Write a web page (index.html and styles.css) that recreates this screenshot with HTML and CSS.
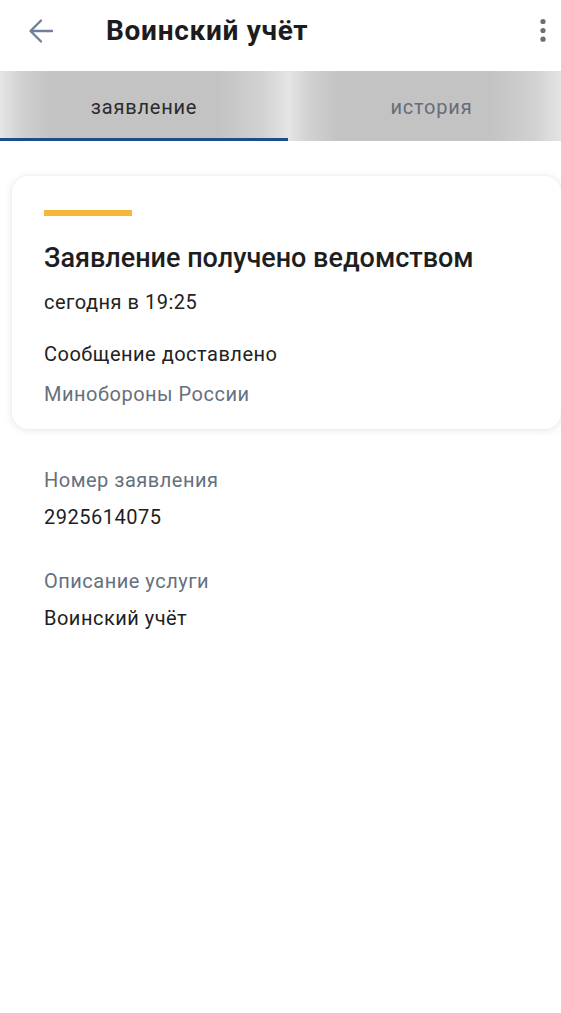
FILE: index.html
```html
<!DOCTYPE html>
<html lang="ru">
<head>
<meta charset="utf-8">
<title>Воинский учёт</title>
<link rel="stylesheet" href="styles.css">
</head>
<body>
<header class="topbar">
  <svg class="back" width="30" height="30" viewBox="0 0 30 30" aria-hidden="true">
    <path d="M25 15 H4 M14 4.5 L3.5 15 L14 25.5" fill="none" stroke="#71809a" stroke-width="2.4" stroke-linecap="round" stroke-linejoin="round"/>
  </svg>
  <h1 class="title">Воинский учёт</h1>
  <svg class="more" width="8" height="30" viewBox="0 0 8 30" aria-hidden="true">
    <circle cx="4" cy="5.5" r="2.6" fill="#6b6e73"/>
    <circle cx="4" cy="14.5" r="2.6" fill="#6b6e73"/>
    <circle cx="4" cy="23.2" r="2.6" fill="#6b6e73"/>
  </svg>
</header>

<nav class="tabs">
  <div class="tab tab-active">заявление</div>
  <div class="tab tab-right">история</div>
</nav>

<section class="card">
  <div class="status-bar"></div>
  <h2 class="card-title">Заявление получено ведомством</h2>
  <p class="card-date">сегодня в 19:25</p>
  <p class="card-msg">Сообщение доставлено</p>
  <p class="card-org">Минобороны России</p>
</section>

<dl class="details">
  <dt class="label">Номер заявления</dt>
  <dd class="value">2925614075</dd>
  <dt class="label label-next">Описание услуги</dt>
  <dd class="value">Воинский учёт</dd>
</dl>
</body>
</html>
```

FILE: styles.css
```css
html, body {
  margin: 0;
  padding: 0;
  background: #ffffff;
}

body {
  font-family: Roboto, "Noto Sans", "Liberation Sans", sans-serif;
  color: #202124;
  width: 561px;
  overflow-x: hidden;
}

.topbar {
  height: 71px;
  display: flex;
  align-items: center;
}

.back {
  margin-left: 27px;
  margin-top: -10px;
  flex: none;
}

.title {
  margin: -10px 0 0 49px;
  font-size: 28px;
  font-weight: 700;
  letter-spacing: 0.7px;
  line-height: 32px;
  color: #1c1c1e;
  flex: 1;
}

.more {
  margin-right: 14px;
  margin-top: -10px;
  flex: none;
}

.tabs {
  display: grid;
  grid-template-columns: 288px 1fr;
  height: 70px;
}

.tab {
  display: flex;
  align-items: center;
  justify-content: center;
  font-size: 20px;
  line-height: 24px;
  letter-spacing: 0.8px;
  color: #666d78;
  background: linear-gradient(to right, #e6e6e6 0, #d2d2d2 20px, #c3c3c3 50px, #c3c3c3 calc(100% - 70px), #d2d2d2 calc(100% - 25px), #e4e4e4 100%);
  box-sizing: border-box;
  padding-top: 2px;
}

.tab-active {
  color: #2b2b2b;
  border-bottom: 3px solid #1f4c8c;
  padding-top: 5px;
}

.tab-right {
  padding-left: 14px;
}

.card {
  margin: 35px 0 0 12px;
  padding: 34px 32px 23px;
  background: #ffffff;
  border-radius: 16px;
  box-shadow: 0 1px 8px rgba(0, 0, 0, 0.1), 0 0 2px rgba(0, 0, 0, 0.05);
}

.status-bar {
  width: 88px;
  height: 6px;
  background: #f4b73a;
}

.card-title {
  margin: 27px 0 0;
  font-size: 27px;
  font-weight: 500;
  line-height: 30px;
  color: #1e1e1e;
}

.card-date,
.card-msg,
.card-org {
  margin: 0;
  font-size: 20px;
  line-height: 24px;
  letter-spacing: 0.5px;
  color: #222222;
}

.card-date {
  margin-top: 17px;
}

.card-msg {
  margin-top: 28px;
}

.card-org {
  margin-top: 16px;
  color: #66707d;
}

.details {
  margin: 39px 0 0;
  padding: 0 44px;
}

.label {
  font-size: 20px;
  line-height: 24px;
  letter-spacing: 0.5px;
  color: #66707d;
}

.label-next {
  margin-top: 40px;
}

.value {
  margin: 13px 0 0;
  font-size: 20px;
  line-height: 24px;
  letter-spacing: 0.5px;
  color: #1e1e1e;
}
```
